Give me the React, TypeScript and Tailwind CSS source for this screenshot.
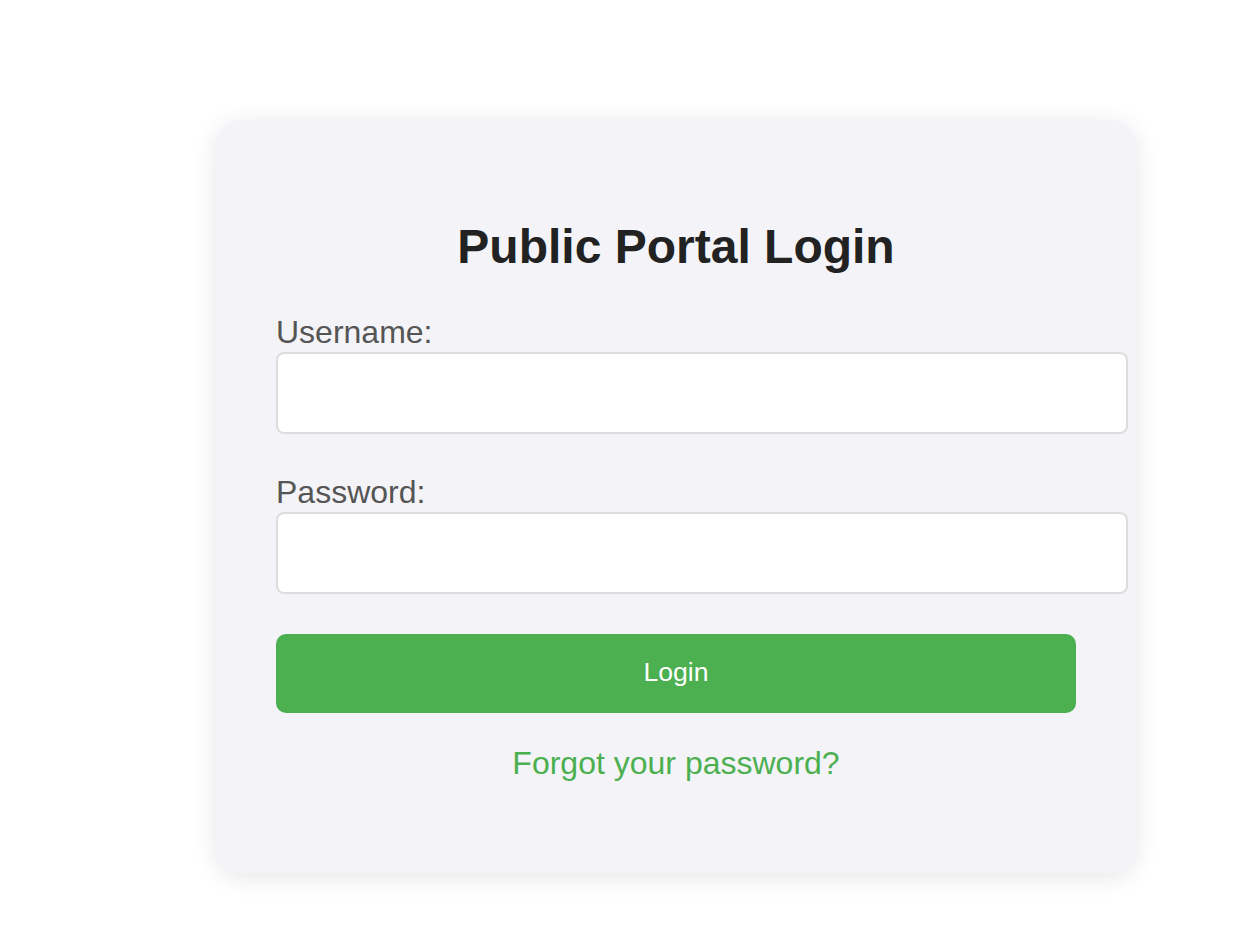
export default function App() {
  return (
    <div className="min-h-screen bg-white pt-[120px] pl-[216px] font-['Liberation_Sans',Arial,sans-serif]">
      <div className="w-[920px] rounded-[26px] bg-[#f4f4f8] px-[60px] pt-[60px] pb-[92px] shadow-[0_4px_24px_rgba(0,0,0,0.1)]">
        <h2 className="my-[40px] text-center text-[48px] leading-[54px] font-bold text-[#222]">
          Public Portal Login
        </h2>
        <form className="flex flex-col" onSubmit={(e) => e.preventDefault()}>
          <label htmlFor="username" className="text-[32px] leading-[36px] text-[#555]">
            Username:
          </label>
          <input
            id="username"
            type="text"
            className="mt-[2px] h-[82px] w-[852px] rounded-lg border-2 border-[#ddd] bg-white px-6 text-[26px] outline-none"
          />
          <label htmlFor="password" className="mt-[40px] text-[32px] leading-[36px] text-[#555]">
            Password:
          </label>
          <input
            id="password"
            type="password"
            className="mt-[2px] h-[82px] w-[852px] rounded-lg border-2 border-[#ddd] bg-white px-6 text-[26px] outline-none"
          />
          <button
            type="submit"
            className="mt-[40px] h-[79px] w-[800px] rounded-[10px] bg-[#4caf50] pb-[4px] text-[26.67px] text-white"
          >
            Login
          </button>
        </form>
        <div className="mt-[32px] text-center text-[32px] leading-[36px]">
          <a href="#" className="text-[#4caf50]">
            Forgot your password?
          </a>
        </div>
      </div>
    </div>
  );
}
